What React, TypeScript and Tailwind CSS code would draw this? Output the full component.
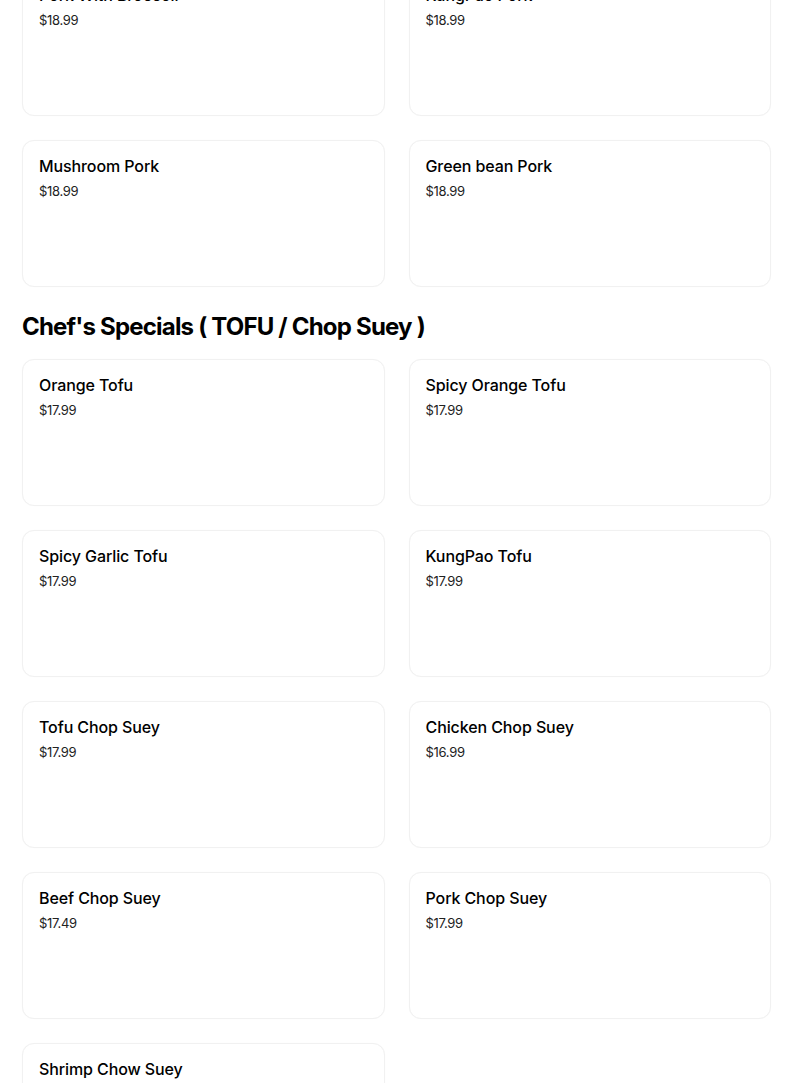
import React from "react";

type Item = { name: string; price: string };

const top: Item[] = [
  { name: "Pork With Broccoli", price: "$18.99" },
  { name: "KungPao Pork", price: "$18.99" },
  { name: "Mushroom Pork", price: "$18.99" },
  { name: "Green bean Pork", price: "$18.99" },
];

const tofu: Item[] = [
  { name: "Orange Tofu", price: "$17.99" },
  { name: "Spicy Orange Tofu", price: "$17.99" },
  { name: "Spicy Garlic Tofu", price: "$17.99" },
  { name: "KungPao Tofu", price: "$17.99" },
  { name: "Tofu Chop Suey", price: "$17.99" },
  { name: "Chicken Chop Suey", price: "$16.99" },
  { name: "Beef Chop Suey", price: "$17.49" },
  { name: "Pork Chop Suey", price: "$17.99" },
  { name: "Shrimp Chow Suey", price: "$17.99" },
];

function Card({ item }: { item: Item }) {
  return (
    <div className="h-[147px] rounded-[12px] border border-[#f1f1f1] bg-white px-4 pt-[15px] shadow-[0_0_1px_rgba(0,0,0,0.04)]">
      <div className="text-[16px] leading-[20px] font-medium tracking-[-0.1px] text-black">{item.name}</div>
      <div className="mt-[5px] text-[13px] leading-[20px] tracking-[-0.3px] text-[#222]">{item.price}</div>
    </div>
  );
}

function Grid({ items }: { items: Item[] }) {
  return (
    <div className="grid grid-cols-2 gap-x-[24px] gap-y-[24px]">
      {items.map((it) => (
        <Card key={it.name} item={it} />
      ))}
    </div>
  );
}

export default function App() {
  return (
    <div
      className="h-[1083px] w-[804px] overflow-hidden bg-white"
      style={{ fontFamily: "Inter, 'Noto Sans', sans-serif" }}
    >
      <div className="mt-[-31px] w-[772px] pl-[22px] pr-[1px]">
        <Grid items={top} />
        <h2 className="mt-[24px] mb-[16px] text-[24px] leading-[32px] font-bold tracking-[-0.8px] text-black">
          Chef's Specials ( TOFU / Chop Suey )
        </h2>
        <Grid items={tofu} />
      </div>
    </div>
  );
}
